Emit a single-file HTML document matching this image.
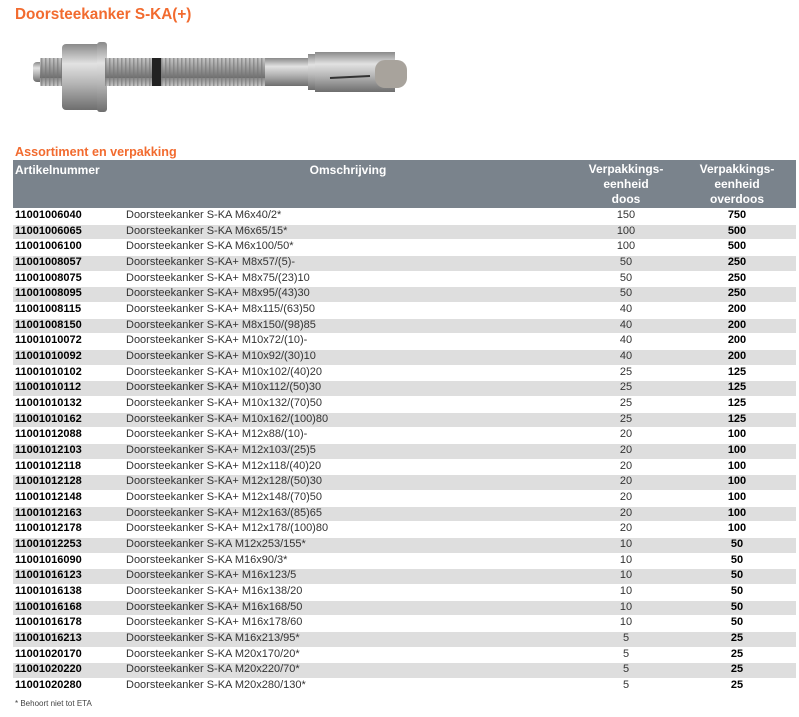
<!DOCTYPE html>
<html><head><meta charset="utf-8"><style>
body{margin:0;width:799px;height:717px;background:#fff;font-family:"Liberation Sans",Arial,sans-serif;position:relative;overflow:hidden}
.t1{position:absolute;left:15px;top:6px;color:#f26b2f;font-weight:bold;font-size:15.3px}
.t2{position:absolute;left:15px;top:145px;color:#f26b2f;font-weight:bold;font-size:12.6px}
.hd{position:absolute;left:13px;top:160px;width:783px;height:48px;background:#7a838c;color:#fff;font-weight:bold;font-size:12px}
.hd div{position:absolute;text-align:center;line-height:15px}
#rows{position:absolute;left:13px;top:208px;width:783px}
.r{height:15.68px;position:relative;font-size:11px;line-height:15.68px;color:#333}
.r:nth-child(even){background:#dedede;box-shadow:inset 0 1px 0 #fff}
.r span{position:absolute;top:0}
.a{left:2px;font-weight:bold;color:#000}
.b{left:113px}
.c{left:563px;width:100px;text-align:center}
.d{left:674px;width:100px;text-align:center;font-weight:bold;color:#000}
.fn{position:absolute;left:15px;top:699px;font-size:8px;color:#444}
</style></head><body>
<div class="t1">Doorsteekanker S-KA(+)</div>
<svg style="position:absolute;left:25px;top:38px" width="390" height="80" viewBox="0 0 390 80">
<defs>
<linearGradient id="g" x1="0" y1="0" x2="0" y2="1"><stop offset="0" stop-color="#8a8a8a"/><stop offset=".3" stop-color="#e2e2e2"/><stop offset=".6" stop-color="#b5b5b5"/><stop offset="1" stop-color="#6e6e6e"/></linearGradient>
<pattern id="th" width="4" height="40" patternUnits="userSpaceOnUse"><rect width="4" height="40" fill="url(#g)"/><rect width="1.5" height="40" fill="#777" opacity=".6"/></pattern>
</defs>
<rect x="8" y="24" width="35" height="20" rx="4" fill="url(#g)"/>
<rect x="15" y="20" width="40" height="28" fill="url(#th)"/>
<rect x="37" y="6" width="40" height="66" rx="4" fill="url(#g)"/>
<rect x="72" y="4" width="10" height="70" rx="3" fill="url(#g)"/>
<rect x="80" y="20" width="160" height="28" fill="url(#th)"/>
<rect x="127" y="20" width="9" height="28" fill="#222"/>
<rect x="240" y="20" width="70" height="28" fill="url(#g)"/>
<rect x="283" y="16" width="10" height="36" fill="url(#g)"/>
<rect x="290" y="14" width="80" height="40" fill="url(#g)"/>
<line x1="305" y1="40" x2="345" y2="38" stroke="#333" stroke-width="2"/>
<rect x="350" y="22" width="32" height="28" rx="10" fill="#a8a39c"/>
</svg>
<div class="t2">Assortiment en verpakking</div>
<div class="hd">
<div style="left:2px;top:3px">Artikelnummer</div>
<div style="left:280px;top:3px;width:110px">Omschrijving</div>
<div style="left:563px;top:2px;width:100px">Verpakkings-<br>eenheid<br>doos</div>
<div style="left:674px;top:2px;width:100px">Verpakkings-<br>eenheid<br>overdoos</div>
</div>
<div id="rows">
<div class="r"><span class="a">11001006040</span><span class="b">Doorsteekanker S-KA M6x40/2*</span><span class="c">150</span><span class="d">750</span></div>
<div class="r"><span class="a">11001006065</span><span class="b">Doorsteekanker S-KA M6x65/15*</span><span class="c">100</span><span class="d">500</span></div>
<div class="r"><span class="a">11001006100</span><span class="b">Doorsteekanker S-KA M6x100/50*</span><span class="c">100</span><span class="d">500</span></div>
<div class="r"><span class="a">11001008057</span><span class="b">Doorsteekanker S-KA+ M8x57/(5)-</span><span class="c">50</span><span class="d">250</span></div>
<div class="r"><span class="a">11001008075</span><span class="b">Doorsteekanker S-KA+ M8x75/(23)10</span><span class="c">50</span><span class="d">250</span></div>
<div class="r"><span class="a">11001008095</span><span class="b">Doorsteekanker S-KA+ M8x95/(43)30</span><span class="c">50</span><span class="d">250</span></div>
<div class="r"><span class="a">11001008115</span><span class="b">Doorsteekanker S-KA+ M8x115/(63)50</span><span class="c">40</span><span class="d">200</span></div>
<div class="r"><span class="a">11001008150</span><span class="b">Doorsteekanker S-KA+ M8x150/(98)85</span><span class="c">40</span><span class="d">200</span></div>
<div class="r"><span class="a">11001010072</span><span class="b">Doorsteekanker S-KA+ M10x72/(10)-</span><span class="c">40</span><span class="d">200</span></div>
<div class="r"><span class="a">11001010092</span><span class="b">Doorsteekanker S-KA+ M10x92/(30)10</span><span class="c">40</span><span class="d">200</span></div>
<div class="r"><span class="a">11001010102</span><span class="b">Doorsteekanker S-KA+ M10x102/(40)20</span><span class="c">25</span><span class="d">125</span></div>
<div class="r"><span class="a">11001010112</span><span class="b">Doorsteekanker S-KA+ M10x112/(50)30</span><span class="c">25</span><span class="d">125</span></div>
<div class="r"><span class="a">11001010132</span><span class="b">Doorsteekanker S-KA+ M10x132/(70)50</span><span class="c">25</span><span class="d">125</span></div>
<div class="r"><span class="a">11001010162</span><span class="b">Doorsteekanker S-KA+ M10x162/(100)80</span><span class="c">25</span><span class="d">125</span></div>
<div class="r"><span class="a">11001012088</span><span class="b">Doorsteekanker S-KA+ M12x88/(10)-</span><span class="c">20</span><span class="d">100</span></div>
<div class="r"><span class="a">11001012103</span><span class="b">Doorsteekanker S-KA+ M12x103/(25)5</span><span class="c">20</span><span class="d">100</span></div>
<div class="r"><span class="a">11001012118</span><span class="b">Doorsteekanker S-KA+ M12x118/(40)20</span><span class="c">20</span><span class="d">100</span></div>
<div class="r"><span class="a">11001012128</span><span class="b">Doorsteekanker S-KA+ M12x128/(50)30</span><span class="c">20</span><span class="d">100</span></div>
<div class="r"><span class="a">11001012148</span><span class="b">Doorsteekanker S-KA+ M12x148/(70)50</span><span class="c">20</span><span class="d">100</span></div>
<div class="r"><span class="a">11001012163</span><span class="b">Doorsteekanker S-KA+ M12x163/(85)65</span><span class="c">20</span><span class="d">100</span></div>
<div class="r"><span class="a">11001012178</span><span class="b">Doorsteekanker S-KA+ M12x178/(100)80</span><span class="c">20</span><span class="d">100</span></div>
<div class="r"><span class="a">11001012253</span><span class="b">Doorsteekanker S-KA M12x253/155*</span><span class="c">10</span><span class="d">50</span></div>
<div class="r"><span class="a">11001016090</span><span class="b">Doorsteekanker S-KA M16x90/3*</span><span class="c">10</span><span class="d">50</span></div>
<div class="r"><span class="a">11001016123</span><span class="b">Doorsteekanker S-KA+ M16x123/5</span><span class="c">10</span><span class="d">50</span></div>
<div class="r"><span class="a">11001016138</span><span class="b">Doorsteekanker S-KA+ M16x138/20</span><span class="c">10</span><span class="d">50</span></div>
<div class="r"><span class="a">11001016168</span><span class="b">Doorsteekanker S-KA+ M16x168/50</span><span class="c">10</span><span class="d">50</span></div>
<div class="r"><span class="a">11001016178</span><span class="b">Doorsteekanker S-KA+ M16x178/60</span><span class="c">10</span><span class="d">50</span></div>
<div class="r"><span class="a">11001016213</span><span class="b">Doorsteekanker S-KA M16x213/95*</span><span class="c">5</span><span class="d">25</span></div>
<div class="r"><span class="a">11001020170</span><span class="b">Doorsteekanker S-KA M20x170/20*</span><span class="c">5</span><span class="d">25</span></div>
<div class="r"><span class="a">11001020220</span><span class="b">Doorsteekanker S-KA M20x220/70*</span><span class="c">5</span><span class="d">25</span></div>
<div class="r"><span class="a">11001020280</span><span class="b">Doorsteekanker S-KA M20x280/130*</span><span class="c">5</span><span class="d">25</span></div>
</div>
<div class="fn">* Behoort niet tot ETA</div>
</body></html>
